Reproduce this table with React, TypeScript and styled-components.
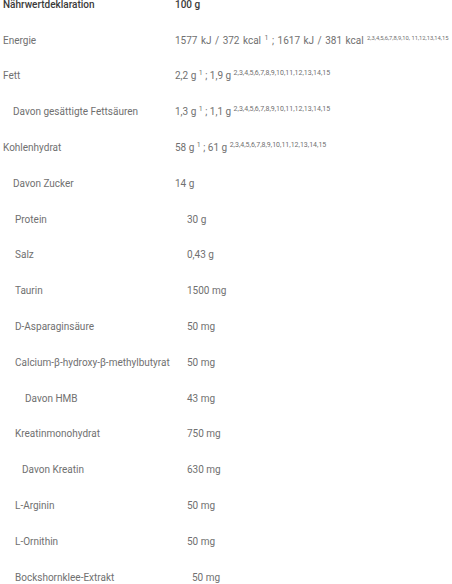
import React from 'react'
import { createGlobalStyle, styled } from 'styled-components'

const GlobalStyle = createGlobalStyle`
  html, body {
    margin: 0;
    padding: 0;
    background: #ffffff;
  }
  body {
    font-family: Roboto, 'Liberation Sans', sans-serif;
    overflow: hidden;
  }
`

const Table = styled.div`
  display: flex;
  flex-direction: column;
  margin-top: -13px;
  width: 452px;
`

const Row = styled.div<{ $bold?: boolean }>`
  display: grid;
  grid-template-columns: 175px 1fr;
  align-items: center;
  height: 35.8px;
  font-size: 10px;
  line-height: 12px;
  font-weight: ${({ $bold }) => ($bold ? 500 : 400)};
  color: ${({ $bold }) => ($bold ? '#3a3a3a' : '#707070')};
  white-space: nowrap;
`

const Label = styled.div<{ $indent: number }>`
  padding-left: ${({ $indent }) => $indent}px;
`

const Value = styled.div<{ $shift: number; $spacing?: number }>`
  padding-left: ${({ $shift }) => $shift}px;
  word-spacing: ${({ $spacing }) => $spacing ?? 0}px;
`

const Sup = styled.sup<{ $size?: number }>`
  font-size: ${({ $size }) => $size ?? 7}px;
  line-height: 0;
  vertical-align: 4.5px;
  word-spacing: 0;
`

type Item = {
  label: string
  value: React.ReactNode
  indent: number
  shift: number
  spacing?: number
  bold?: boolean
}

const FOOT = '2,3,4,5,6,7,8,9,10,11,12,13,14,15'

const items: Item[] = [
  { label: 'Nährwertdeklaration', value: '100 g', indent: 3, shift: 0, bold: true },
  {
    label: 'Energie',
    value: (
      <>
        1577 kJ / 372 kcal <Sup>1</Sup> ; 1617 kJ / 381 kcal{' '}
        <Sup $size={5.8}>2,3,4,5,6,7,8,9,10, 11,12,13,14,15</Sup>
      </>
    ),
    indent: 3,
    shift: 0,
    spacing: 1,
  },
  {
    label: 'Fett',
    value: (
      <>
        2,2 g <Sup>1</Sup> ; 1,9 g <Sup>{FOOT}</Sup>
      </>
    ),
    indent: 3,
    shift: 0,
  },
  {
    label: 'Davon gesättigte Fettsäuren',
    value: (
      <>
        1,3 g <Sup>1</Sup> ; 1,1 g <Sup>{FOOT}</Sup>
      </>
    ),
    indent: 13,
    shift: 0,
  },
  {
    label: 'Kohlenhydrat',
    value: (
      <>
        58 g <Sup>1</Sup> ; 61 g <Sup>{FOOT}</Sup>
      </>
    ),
    indent: 3,
    shift: 0,
  },
  { label: 'Davon Zucker', value: '14 g', indent: 13, shift: 0 },
  { label: 'Protein', value: '30 g', indent: 15, shift: 12 },
  { label: 'Salz', value: '0,43 g', indent: 15, shift: 12 },
  { label: 'Taurin', value: '1500 mg', indent: 15, shift: 12 },
  { label: 'D-Asparaginsäure', value: '50 mg', indent: 15, shift: 12 },
  { label: 'Calcium-β-hydroxy-β-methylbutyrat', value: '50 mg', indent: 15, shift: 12 },
  { label: 'Davon HMB', value: '43 mg', indent: 25, shift: 12 },
  { label: 'Kreatinmonohydrat', value: '750 mg', indent: 15, shift: 12 },
  { label: 'Davon Kreatin', value: '630 mg', indent: 22, shift: 12 },
  { label: 'L-Arginin', value: '50 mg', indent: 15, shift: 12 },
  { label: 'L-Ornithin', value: '50 mg', indent: 15, shift: 12 },
  { label: 'Bockshornklee-Extrakt', value: '50 mg', indent: 15, shift: 17 },
]

export default function App() {
  return (
    <>
      <GlobalStyle />
      <Table>
        {items.map((it) => (
          <Row key={it.label} $bold={it.bold}>
            <Label $indent={it.indent}>{it.label}</Label>
            <Value $shift={it.shift} $spacing={it.spacing}>
              {it.value}
            </Value>
          </Row>
        ))}
      </Table>
    </>
  )
}
